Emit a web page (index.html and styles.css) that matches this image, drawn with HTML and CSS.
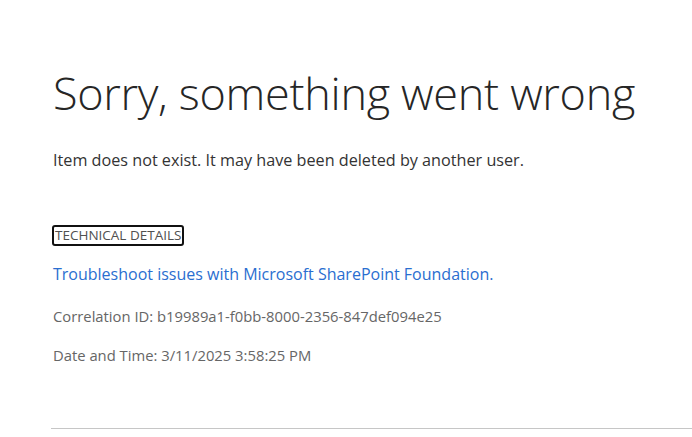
FILE: index.html
```html
<!DOCTYPE html>
<html lang="en">
<head>
<meta charset="utf-8">
<title>Error</title>
<link rel="stylesheet" href="styles.css">
</head>
<body>
<main class="page">
  <h1 class="title">Sorry, something went wrong</h1>
  <p class="message">Item does not exist. It may have been deleted by another user.</p>
  <section class="details">
    <button class="tech" type="button">TECHNICAL DETAILS</button>
    <p class="help"><a class="help-link" href="#">Troubleshoot issues with Microsoft SharePoint Foundation.</a></p>
    <p class="meta meta-first">Correlation ID: b19989a1-f0bb-8000-2356-847def094e25</p>
    <p class="meta">Date and Time: 3/11/2025 3:58:25 PM</p>
  </section>
  <hr class="rule">
</main>
</body>
</html>
```

FILE: styles.css
```css
html, body {
  margin: 0;
  padding: 0;
  background: #fff;
}
body {
  font-family: "Open Sans", "Noto Sans", "Liberation Sans", sans-serif;
  color: #333;
  overflow: hidden;
}
.page {
  padding: 53px 0 0 53px;
}
.title {
  margin: 0;
  font-size: 45px;
  font-weight: 300;
  line-height: 80px;
  color: #262626;
  letter-spacing: -0.3px;
}
.message {
  margin: 0;
  padding-top: 15px;
  font-size: 16.2px;
  line-height: 24px;
  color: #333;
}
.details {
  padding-top: 53px;
  display: flex;
  flex-direction: column;
  align-items: flex-start;
}
.tech {
  font-family: inherit;
  font-size: 13.5px;
  line-height: 17px;
  color: #505050;
  background: #fff;
  border: 2px solid #111;
  border-radius: 3px;
  padding: 0 1px;
  margin: 0 0 0 -1px;
  cursor: pointer;
}
.help {
  margin: 16px 0 0;
  font-size: 16px;
  line-height: 24px;
}
.help-link {
  color: #2a6ed0;
  text-decoration: none;
}
.meta {
  margin: 15px 0 0;
  font-size: 14.8px;
  line-height: 24px;
  color: #666;
}
.meta-first {
  margin-top: 18px;
}
.rule {
  margin: 61px 0 0 -2px;
  border: 0;
  height: 1px;
  background: #c6c6c6;
}
```
